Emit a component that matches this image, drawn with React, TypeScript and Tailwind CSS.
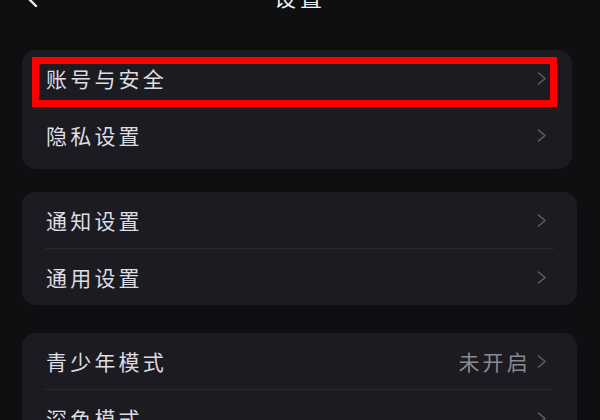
import React from "react";

type Row = { label: string; value?: string };

const groups: { rows: Row[]; cls: string }[] = [
  { rows: [{ label: "账号与安全" }, { label: "隐私设置" }], cls: "w-[550px] pb-[6px]" },
  { rows: [{ label: "通知设置" }, { label: "通用设置" }], cls: "w-[555px] mt-[23px]" },
  { rows: [{ label: "青少年模式", value: "未开启" }, { label: "深色模式" }], cls: "w-[555px] mt-[28px]" },
];

function Chevron() {
  return (
    <svg width="10" height="13" viewBox="0 0 10 13" fill="none" className="shrink-0">
      <path d="M1.5 1l6.5 5.5-6.5 5.5" stroke="#5f5e65" strokeWidth="1.6" strokeLinecap="round" strokeLinejoin="round" />
    </svg>
  );
}

export default function App() {
  return (
    <div
      className="w-[600px] h-[420px] overflow-hidden bg-[#0f0f11] text-[#dedde2]"
      style={{ fontFamily: '"Noto Sans CJK SC", "Noto Sans", sans-serif' }}
    >
      {/* header, mostly scrolled out of view */}
      <div className="relative -mt-[26px] h-[44px] flex items-center justify-center">
        <svg width="16" height="26" viewBox="0 0 16 26" fill="none" className="absolute left-[22px] top-[9px]">
          <path d="M14 1L3 12l11 11" stroke="#ececef" strokeWidth="2.4" strokeLinecap="round" strokeLinejoin="round" />
        </svg>
        <span className="text-[22px] tracking-[4px] text-[#f2f2f4]">设置</span>
      </div>

      <div className="pt-[32px] pl-[22px] flex flex-col">
        {groups.map((g, gi) => (
          <div key={gi} className={`relative rounded-[14px] bg-[#1c1b21] ${g.cls}`}>
            {g.rows.map((r, ri) => (
              <div key={ri}>
                {ri > 0 && <div className="mx-[23px] h-px bg-[#2a292f]" />}
                <div className="h-[56px] flex items-center pl-[24px]">
                  <span className="text-[21px] tracking-[3.2px] leading-none">{r.label}</span>
                  <div className={`ml-auto flex items-center justify-end ${gi === 0 ? "mr-[25px]" : "mr-[30px]"}`}>
                    {r.value && (
                      <span className="text-[21px] tracking-[3.2px] leading-none text-[#8b8a90] mr-[6px]">{r.value}</span>
                    )}
                    <Chevron />
                  </div>
                </div>
              </div>
            ))}
            {gi === 0 && (
              <div className="absolute left-[10px] top-[7px] w-[525px] h-[50px] border-[7px] border-[#ff0000]" />
            )}
          </div>
        ))}
      </div>
    </div>
  );
}
